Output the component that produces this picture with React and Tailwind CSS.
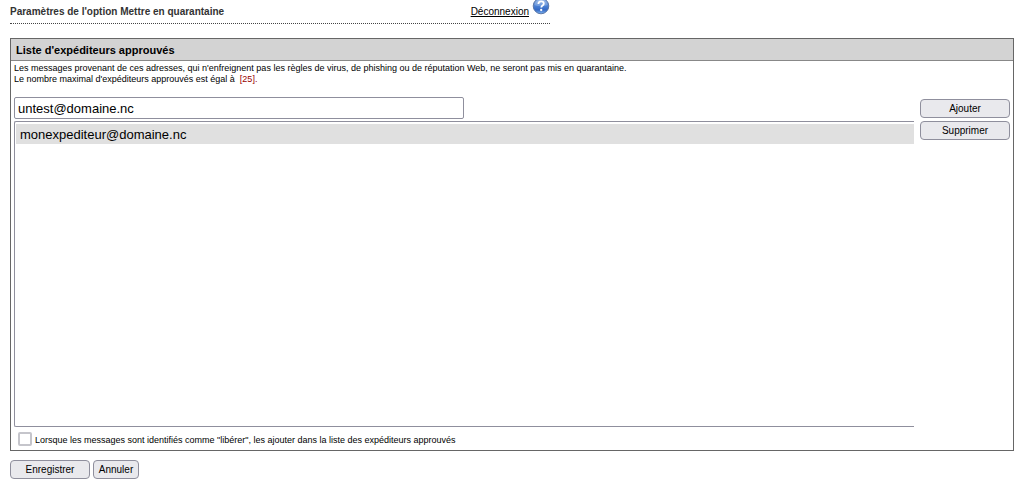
import React, { useState } from 'react';

const MAX_EXPEDITEURS = 25;

function Bouton({ children, className = "", ...props }) {
  return (
    <button
      type="button"
      className={`h-[19px] rounded-[4px] border border-[#8f8f9d] bg-[#e9e9ed] text-[10px] leading-3 text-black hover:bg-[#d0d0d7] ${className}`}
      {...props}
    >
      {children}
    </button>
  );
}

function IconeAide() {
  return (
    <svg width="18" height="18" viewBox="0 0 18 18" aria-hidden="true">
      <defs>
        <linearGradient id="aide-fond" x1="0" y1="0" x2="0" y2="1">
          <stop offset="0" stopColor="#8fb2e6" />
          <stop offset="0.5" stopColor="#4a80d3" />
          <stop offset="0.75" stopColor="#3468c4" />
          <stop offset="1" stopColor="#7fb6f2" />
        </linearGradient>
      </defs>
      <circle cx="9" cy="9" r="7.8" fill="url(#aide-fond)" stroke="#56719f" strokeWidth="0.9" />
      <path d="M2.5 8a6.6 6.6 0 0 1 13 0c-3 1.6-10 1.6-13 0z" fill="#ffffff" opacity="0.2" />
      <path
        d="M6.4 7c0-1.7 1.1-2.6 2.7-2.6s2.7.9 2.7 2.3c0 1.8-2.5 1.9-2.5 3.7"
        fill="none"
        stroke="#ffffff"
        strokeWidth="1.8"
      />
      <circle cx="9.2" cy="13" r="1.15" fill="#ffffff" />
    </svg>
  );
}

function EnTete() {
  return (
    <header className="ml-[10px] flex h-6 max-w-[540px] items-start justify-between border-b border-dotted border-[#444444]">
      <h1 className="pt-[5px] text-[10px] leading-[13px] font-bold text-[#333333]">
        Paramètres de l'option Mettre en quarantaine
      </h1>
      <div className="flex items-start gap-[3px]">
        <a href="#deconnexion" className="pt-[5px] text-[10px] leading-[13px] text-black underline">Déconnexion</a>
        <a href="#aide" aria-label="Aide" className="-mt-[3px] block">
          <IconeAide />
        </a>
      </div>
    </header>
  );
}

export default function App() {
  const [adresse, setAdresse] = useState("untest@domaine.nc");
  const [expediteurs, setExpediteurs] = useState(["monexpediteur@domaine.nc"]);
  const [selection, setSelection] = useState([]);
  const [ajoutAuto, setAjoutAuto] = useState(false);

  const ajouter = () => {
    const valeur = adresse.trim();
    if (!valeur || expediteurs.includes(valeur) || expediteurs.length >= MAX_EXPEDITEURS) return;
    setExpediteurs([...expediteurs, valeur]);
    setAdresse("");
  };

  const supprimer = () => {
    setExpediteurs(expediteurs.filter((e) => !selection.includes(e)));
    setSelection([]);
  };

  return (
    <div className="bg-white pb-2 font-['Liberation_Sans',Arial,sans-serif] text-black">
      <EnTete />

      <main className="mt-[14px] mr-[11px] ml-[10px]">
        <section className="border border-[#666666]">
          <h2 className="border-b border-[#888888] bg-[#d3d3d3] px-[5px] pt-[5px] pb-[3px] text-[11px] leading-[13px] font-bold">
            Liste d'expéditeurs approuvés
          </h2>

          <div className="px-[3px] pt-[2px] text-[9px] leading-[11px]">
            <p>
              Les messages provenant de ces adresses, qui n'enfreignent pas les règles de virus, de phishing ou de
              réputation Web, ne seront pas mis en quarantaine.
            </p>
            <p>
              Le nombre maximal d'expéditeurs approuvés est égal à
              <span className="ml-[5px] text-[#990000]">[{MAX_EXPEDITEURS}].</span>
            </p>
          </div>

          <div className="mt-3 flex gap-[6px] px-[3px]">
            <div className="flex min-w-0 flex-1 flex-col gap-[2px]">
              <input
                type="text"
                aria-label="Adresse de l'expéditeur"
                value={adresse}
                onChange={(e) => setAdresse(e.target.value)}
                className="h-[22px] w-1/2 rounded-[2px] border border-[#8f8f9d] px-[3px] text-[13px]"
              />
              <select
                multiple
                size={15}
                aria-label="Expéditeurs approuvés"
                value={selection}
                onChange={(e) => setSelection(Array.from(e.target.selectedOptions, (o) => o.value))}
                className="h-[306px] w-full overflow-hidden rounded-l-[2px] border border-r-0 border-[#8f8f9d] py-[2px] pl-px text-[13px]"
              >
                {expediteurs.map((e) => (
                  <option key={e} value={e} className="h-5 bg-[#e0e0e0] px-1 pt-[3px] pb-0 text-black">{e}</option>
                ))}
              </select>
            </div>
            <div className="flex w-[90px] flex-col gap-[3px] pt-[2px]">
              <Bouton onClick={ajouter}>Ajouter</Bouton>
              <Bouton onClick={supprimer}>Supprimer</Bouton>
            </div>
          </div>

          <label className="flex items-end gap-[3px] px-[7px] pt-[5px] pb-1 text-[9px] leading-[11px]">
            <input
              type="checkbox"
              checked={ajoutAuto}
              onChange={(e) => setAjoutAuto(e.target.checked)}
              className="size-[14px] appearance-none rounded-[2px] border-2 border-[#c5c5cb] bg-white checked:bg-[#0060df]"
            />
            Lorsque les messages sont identifiés comme "libérer", les ajouter dans la liste des expéditeurs approuvés
          </label>
        </section>

        <div className="mt-[9px] flex gap-[3px]">
          <Bouton className="w-20">Enregistrer</Bouton>
          <Bouton className="w-[46px]">Annuler</Bouton>
        </div>
      </main>
    </div>
  );
}
